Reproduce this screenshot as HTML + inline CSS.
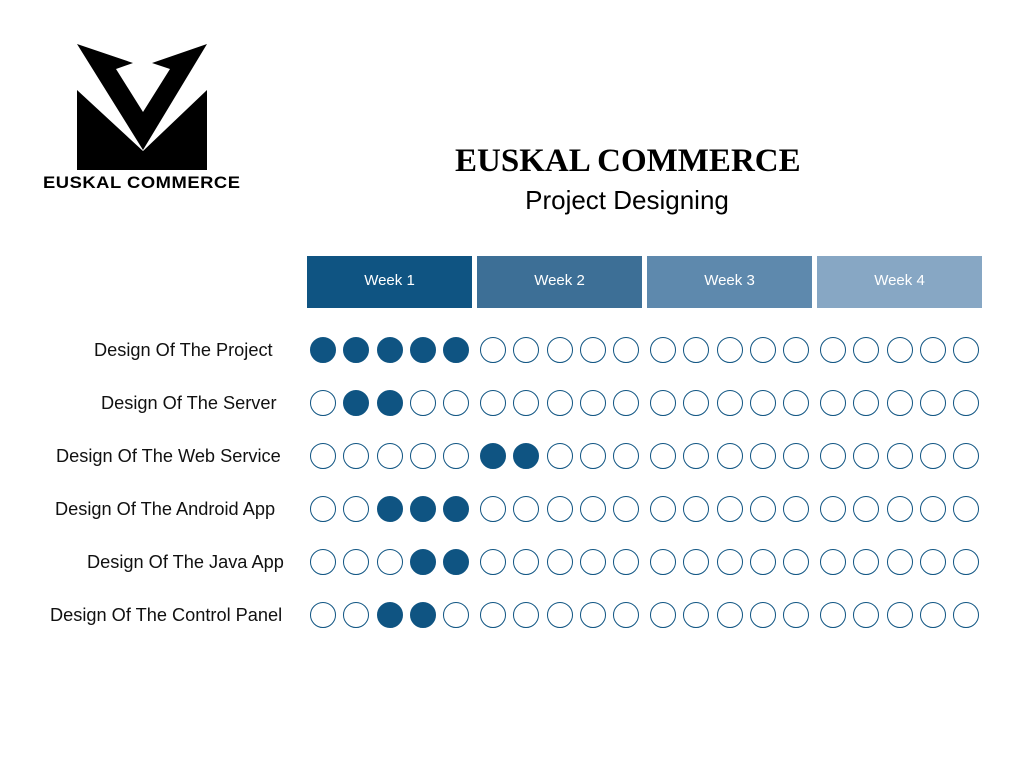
<!DOCTYPE html>
<html><head><meta charset="utf-8"><style>
body{margin:0;width:1024px;height:768px;background:#fff;position:relative;overflow:hidden;font-family:"Liberation Sans",sans-serif}
.a{position:absolute}
.wk{position:absolute;top:256px;height:52px;width:165px;color:#fff;font-size:15px;line-height:50px;text-align:center}
.lab{position:absolute;font-size:18.2px;color:#111;white-space:nowrap;line-height:20px}
.c{position:absolute;width:24px;height:24px;border:1px solid #0f5482;border-radius:50%;box-sizing:content-box}
.f{background:#0f5482}
</style></head><body>
<svg class="a" style="left:0;top:0" width="260" height="180">
<polygon points="77,90 143,151 207,90 207,170 77,170" fill="#000"/>
<polygon points="77,44 133,63 116,69 143,112 170,69 152,63 207,44 143,150" fill="#000"/>
</svg>
<div class="a" style="left:43px;top:173px;font-weight:bold;font-size:17px;letter-spacing:0.5px;transform:scaleX(1.08);transform-origin:left;white-space:nowrap">EUSKAL COMMERCE</div>
<div class="a" style="left:455px;top:143px;width:345px;text-align:center;font-family:'Liberation Serif',serif;font-weight:bold;font-size:33px;white-space:nowrap">EUSKAL COMMERCE</div>
<div class="a" style="left:427px;top:185px;width:400px;text-align:center;font-size:26px;white-space:nowrap">Project Designing</div>
<div class="wk" style="left:307px;background:#0f5482">Week 1</div>
<div class="wk" style="left:477px;background:#3d6f96">Week 2</div>
<div class="wk" style="left:647px;background:#5e89ad">Week 3</div>
<div class="wk" style="left:817px;background:#87a7c4">Week 4</div>
<div class="lab" style="left:94px;top:340px">Design Of The Project</div>
<div class="lab" style="left:101px;top:393px">Design Of The Server</div>
<div class="lab" style="left:56px;top:446px">Design Of The Web Service</div>
<div class="lab" style="left:55px;top:499px">Design Of The Android App</div>
<div class="lab" style="left:87px;top:552px">Design Of The Java App</div>
<div class="lab" style="left:50px;top:605px">Design Of The Control Panel</div>
<div id="g"></div>
<script>
var rows=[[1,2,3,4,5],[2,3],[6,7],[3,4,5],[4,5],[3,4]],ys=[350,403,456,509,562,615],h="";
for(var r=0;r<6;r++)for(var i=0;i<20;i++){var w=Math.floor(i/5),k=i%5;var x=323+w*170+k*33.3;
h+='<div class="c'+(rows[r].indexOf(i+1)>=0?' f':'')+'" style="left:'+(x-13).toFixed(1)+'px;top:'+(ys[r]-13)+'px"></div>';}
document.getElementById('g').innerHTML=h;
</script>
</body></html>
